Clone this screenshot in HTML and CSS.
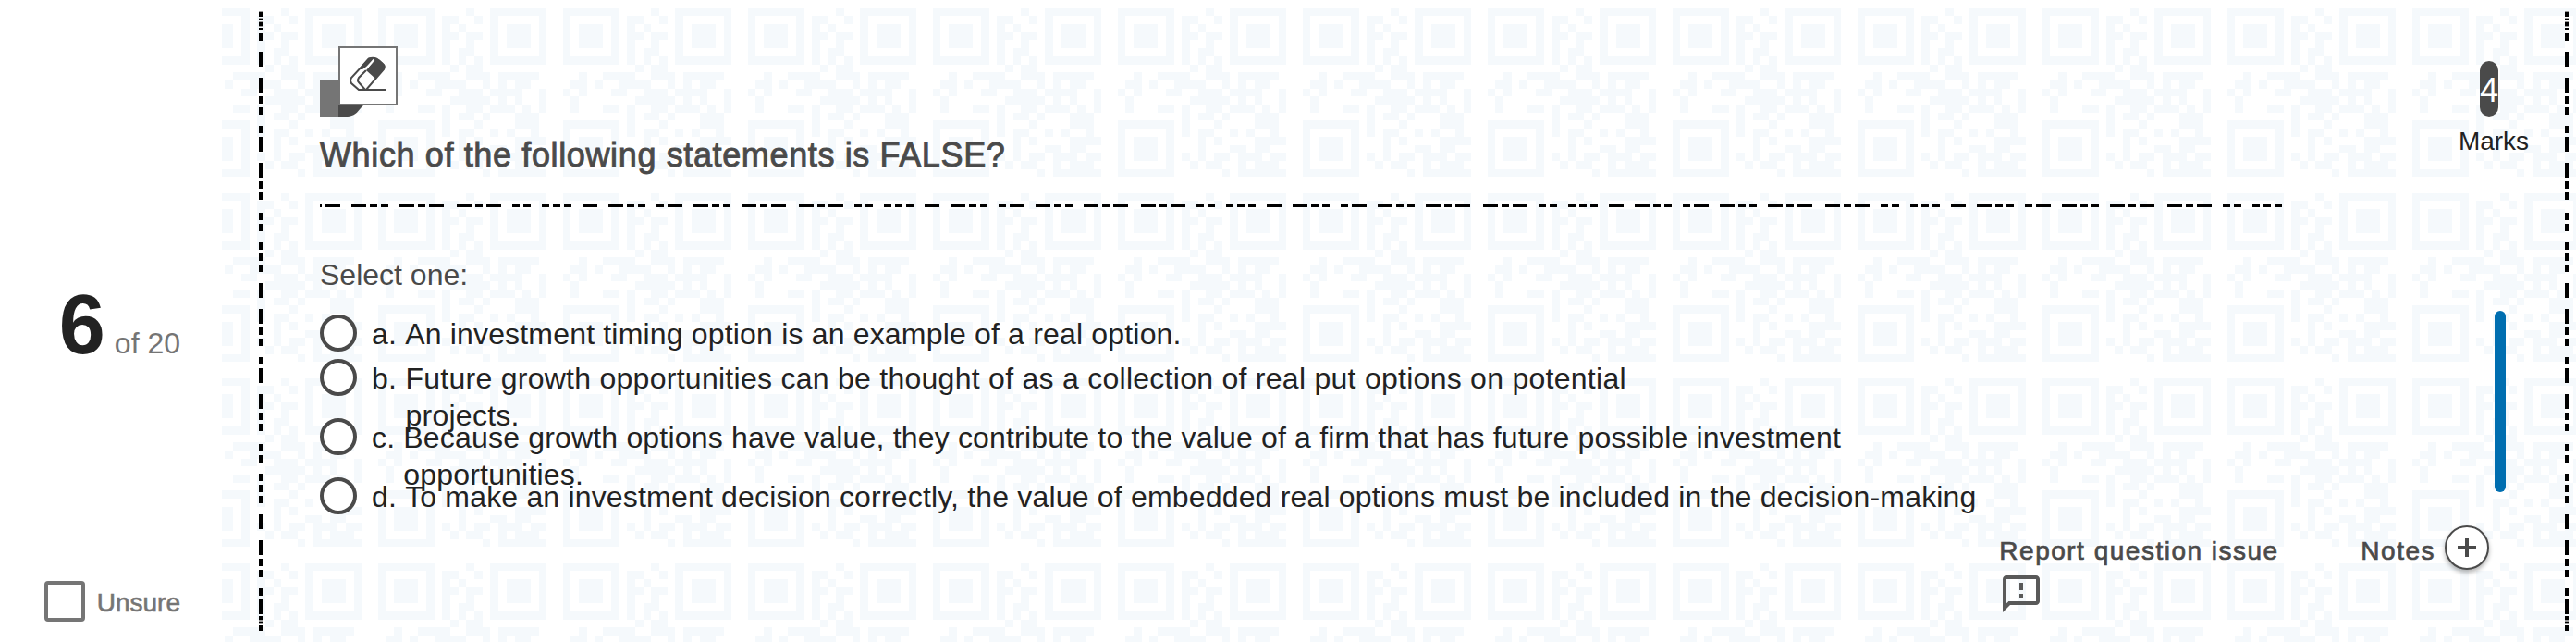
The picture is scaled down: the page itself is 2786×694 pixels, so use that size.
FILE: index.html
```html
<!DOCTYPE html>
<html lang="en">
<head>
    <meta charset="UTF-8">
    <meta name="viewport" content="width=device-width, initial-scale=1.0">
    <title>Question 6</title>
    <link rel="stylesheet" href="styles.css">
</head>
<body>
    <div class="question">

        <div class="rail">
            <div class="counter"><span class="current">6</span><span class="total">of 20</span></div>
            <label class="unsure"><span class="checkbox"></span><span class="unsure_text">Unsure</span></label>
        </div>

        <div class="paper">
            <div class="edge"></div>

            <div class="content">
                <div class="tool">
                    <div class="tool_tab"></div>
                    <svg class="tool_fold" viewBox="0 0 28 12"><path d="M0 0h27C21 5 20 12 8 12H0z"/></svg>
                    <div class="tool_button">
                        <svg class="eraser" viewBox="0 0 60 60">
                            <path class="line" d="M22 45h28"/>
                            <path class="line" d="M31 11.500L12 32q-2 3 0 6l8 7h8l19-22q2-4-1-6l-6-5q-4-2-9-.5z"/>
                            <path class="dark" d="M30 11q5-2 10 1L24 23h-4z"/>
                            <path class="dark" d="M28 24L38 12q3-1 5 1l4 4q2 3 0 6l-9 10z"/>
                            <path class="line" d="M28 24l-8 8q-2 3 0 5l7 8"/>
                            <path class="gap" d="M36.500 12.500L27 23"/>
                        </svg>
                    </div>
                </div>

                <h1 class="title">Which of the following statements is FALSE?</h1>
                <div class="divider"></div>

                <p class="prompt">Select one:</p>
                <ul class="options">
                    <li class="option"><span class="radio"></span><span class="letter">a.&nbsp;</span><div>An investment timing option is an example of a real option.</div></li>
                    <li class="option -tall -wide"><span class="radio"></span><span class="letter">b.&nbsp;</span><div>Future growth opportunities can be thought of as a collection of real put options on potential<br>projects.</div></li>
                    <li class="option -tall"><span class="radio"></span><span class="letter">c.&nbsp;</span><div>Because growth options have value, they contribute to the value of a firm that has future possible investment<br>opportunities.</div></li>
                    <li class="option"><span class="radio"></span><span class="letter">d.&nbsp;</span><div>To make an investment decision correctly, the value of embedded real options must be included in the decision-making</div></li>
                </ul>
            </div>

            <div class="side">
                <div class="marks">
                    <span class="points">4</span>
                    <span>Marks</span>
                </div>
                <div class="scrollbar"></div>
            </div>

            <div class="footer">
                <a class="report">Report question issue
                    <svg class="feedback" viewBox="0 0 24 24"><path d="M20 2H4c-1.100 0-1.990.9-1.990 2L2 22l4-4h14c1.100 0 2-.9 2-2V4c0-1.100-.9-2-2-2zm0 14H5.170l-.59.590-.58.580V4h16v12zM11 12h2v2h-2zm0-6h2v4h-2z"/></svg>
                </a>
                <div class="notes">Notes
                    <span class="add"><svg viewBox="0 0 20 20"><path d="M10 0v20M0 10h20"/></svg></span>
                </div>
            </div>
        </div>

        <div class="edge -right"></div>
    </div>
</body>
</html>
```
FILE: styles.css
```css
* {
  box-sizing: border-box;
}
body {
  margin: 0;
  background: #fff;
  color: #222;
  font-family: "Liberation Sans", Arial, sans-serif;
  font-size: 32px;
  line-height: 40px;
}
.question {
  position: relative;
  display: flex;
  height: 694px;
  overflow: hidden;
}

/* left rail */
.rail {
  width: 240px;
  display: flex;
  flex-direction: column;
  justify-content: space-between;
  align-items: flex-end;
  padding: 299px 45px 22px 0;
  color: #757575;
}
.counter {
  display: flex;
  align-items: baseline;
  gap: 10px;
  line-height: 104px;
}
.current {
  color: #222;
  font-size: 90px;
  font-weight: bold;
}
.unsure {
  display: flex;
  align-items: center;
  gap: 13px;
  font-size: 28px;
  -webkit-text-stroke: 0.6px #757575;
}
.unsure_text {
  padding-top: 4px;
}
.checkbox {
  width: 44px;
  height: 44px;
  border: 4px solid #757575;
  border-radius: 4px;
}

/* paper with the qr pattern */
.paper {
  flex: 1;
  display: grid;
  grid-template-columns: 44px 62px 2122px 1fr;
  grid-template-rows: 558px 136px;
  background: url("data:image/svg+xml,%3Csvg xmlns='http://www.w3.org/2000/svg' width='200' height='200' viewBox='-1 -1 23 23' shape-rendering='crispEdges'%3E%3Cg fill='none' stroke='%23f5f9fc'%3E%3Cpath d='M.5.5h6v6h-6zM14.5.5h6v6h-6zM.5 14.5h6v6h-6z'/%3E%3Cpath stroke-width='3' d='M2 3.5h3M16 3.5h3M2 17.5h3'/%3E%3Cpath d='M11 .5h1M8 1.5h2m2 0h1M8 2.5h1m1 0h1M8 3.5h2m1 0h2M8 4.5h1m2 0h1M8 5.5h1m1 0h2M8 6.5h1m1 0h1m1 0h1M9 7.5h1m1 0h2M2 8.5h1m2 0h4m2 0h3m1 0h5M1 9.5h2m1 0h1m2 0h4m2 0h1m1 0h1m1 0h2M0 10.5h1m1 0h1m3 0h2m2 0h3m1 0h4m2 0h1M1 11.5h1m7 0h5m1 0h1m1 0h1m2 0h1M1 12.5h1m3 0h2m1 0h1m2 0h2m1 0h3m1 0h1m1 0h1M8 13.5h1m1 0h2m1 0h1m3 0h3M8 14.5h1m3 0h1m4 0h3M8 15.5h1m1 0h2m2 0h1m1 0h1m2 0h1M10 16.5h1m1 0h1m4 0h4M10 17.5h1m3 0h2m1 0h2M8 18.5h1m1 0h1m1 0h2m1 0h3m1 0h2M9 19.5h1m1 0h2m2 0h1m1 0h3M13 20.5h1m1 0h6'/%3E%3C/g%3E%3C/svg%3E") -40px 0;
}

/* perforated edges */
.edge {
  grid-column: 1;
  grid-row: 1 / 3;
  justify-self: end;
  width: 4px;
  height: 670px;
  margin-top: 12px;
  background: url("data:image/svg+xml,%3Csvg xmlns='http://www.w3.org/2000/svg' width='4' height='670'%3E%3Cpath stroke='%23999' stroke-width='4' d='M2 0v1m0 6v1m0 3v1m0 4v1m0 641v5'/%3E%3Cpath stroke='%23000' stroke-width='4' d='M2 1v5m0 2v2m0 2v4m0 2v2M2 654v4m0 2v2m0 2v6'/%3E%3Cpath stroke='%23000' stroke-width='4' stroke-dasharray='8 12 16 12 16 4 8 4 8 12 8 4 16 12 16 4 8 4 8 14 8 4 8 12 8 4 8 4' d='M2 24v630'/%3E%3C/svg%3E") no-repeat;
}
.edge.-right {
  position: absolute;
  right: 8px;
  top: 0;
}

.content {
  grid-column: 3;
  grid-row: 1;
  padding-top: 50px;
}
.tool {
  display: grid;
  grid-template-columns: 20px 64px;
  grid-template-rows: 36px 28px 12px;
}
.tool_tab {
  grid-column: 1;
  grid-row: 2 / 4;
  background: #757575;
}
.tool_fold {
  grid-column: 2;
  grid-row: 3;
  width: 28px;
  height: 12px;
  fill: #4a4a4a;
}
.tool_button {
  grid-column: 2;
  grid-row: 1 / 3;
  border: 2px solid #757575;
  background: #fff;
}
.eraser {
  display: block;
  width: 60px;
  height: 60px;
}
.eraser .line {
  fill: none;
  stroke: #4a4a4a;
  stroke-width: 2;
}
.eraser .dark {
  fill: #4a4a4a;
}
.eraser .gap {
  stroke: #fff;
  stroke-width: 2;
}
.title {
  margin: 20px 0 30px;
  color: #4a4a4a;
  font-size: 36px;
  font-weight: normal;
  line-height: 44px;
  letter-spacing: 0.63px;
  -webkit-text-stroke: 0.9px #4a4a4a;
}
.divider {
  height: 4px;
  background: url("data:image/svg+xml,%3Csvg xmlns='http://www.w3.org/2000/svg' width='370' height='4'%3E%3Cpath stroke='%23000' stroke-width='4' stroke-dasharray='8 4 16 12 16 4 8 4 8 12 16 4 8 4 16 14 16 4 8 4 16 12 8 4 8 12 8 4 8 4 8 12 16 12 16 4 8 4 8 12' d='M0 2h370'/%3E%3C/svg%3E") -6px 0 repeat-x;
}
.prompt {
  margin: 53px 0 23px;
  color: #4a4a4a;
}
.options {
  margin: 0;
  padding: 0;
  list-style: none;
}
.option {
  display: flex;
  height: 48px;
  padding-top: 1px;
  letter-spacing: 0.18px;
  white-space: nowrap;
}
/* second line runs into the next option */
.option.-tall {
  height: 64px;
}
.option.-wide {
  letter-spacing: 0.27px;
}
.radio {
  width: 40px;
  height: 40px;
  margin: -1px 16px 0 0;
  border: 4px solid #4a4a4a;
  border-radius: 50%;
  background: #fff;
}

.side {
  grid-column: 4;
  grid-row: 1;
  display: flex;
  flex-direction: column;
  padding: 66px 0 0 190px;
}
.marks {
  display: flex;
  flex-direction: column;
  align-items: center;
  gap: 7px;
  width: 78px;
  font-size: 28px;
}
.points {
  align-self: flex-start;
  width: 20px;
  height: 60px;
  margin-left: 24px;
  border-radius: 10px;
  background: #4a4a4a;
  color: #fff;
  font-size: 36px;
  line-height: 63px;
}
.scrollbar {
  width: 12px;
  height: 196px;
  margin: 163px 0 0 40px;
  border-radius: 6px;
  background: #006eb0;
}

.footer {
  grid-column: 3 / 5;
  grid-row: 2;
  display: flex;
  justify-content: flex-end;
  align-items: flex-start;
  gap: 86px;
  padding: 10px 94px 0 0;
  color: #4a4a4a;
  font-size: 28px;
  letter-spacing: 1.5px;
  -webkit-text-stroke: 0.7px #4a4a4a;
}
.report {
  width: 305px;
  padding-top: 8px;
  white-space: nowrap;
}
.feedback {
  display: block;
  width: 48px;
  height: 48px;
  margin-top: 2px;
  fill: #595959;
  stroke: none;
}
.notes {
  display: flex;
  gap: 10px;
  line-height: 56px;
}
.add {
  display: flex;
  justify-content: center;
  align-items: center;
  width: 48px;
  height: 48px;
  border: 2px solid #4a4a4a;
  border-radius: 50%;
  background: #fff;
  box-shadow: 0 3px 5px rgba(0, 0, 0, 0.3);
}
.add svg {
  width: 20px;
  height: 20px;
  stroke: #4a4a4a;
  stroke-width: 4;
}
```
